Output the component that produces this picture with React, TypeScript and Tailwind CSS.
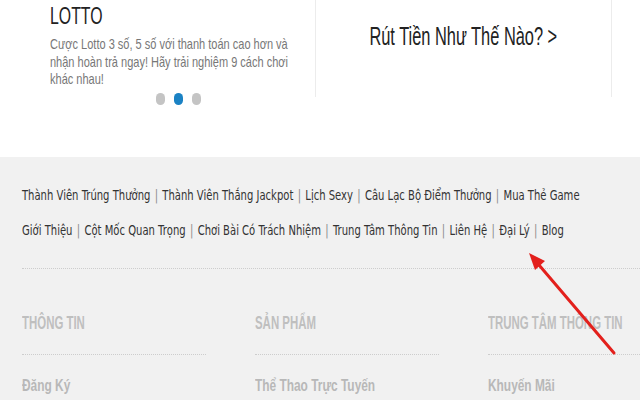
import React from 'react'

const ROW_ONE = ['Thành Viên Trúng Thưởng', 'Thành Viên Thắng Jackpot', 'Lịch Sexy', 'Câu Lạc Bộ Điểm Thưởng', 'Mua Thẻ Game']
const ROW_TWO = ['Giới Thiệu', 'Cột Mốc Quan Trọng', 'Chơi Bài Có Trách Nhiệm', 'Trung Tâm Thông Tin', 'Liên Hệ', 'Đại Lý', 'Blog']

const COLUMNS = [
  { title: 'THÔNG TIN', first: 'Đăng Ký', width: 'w-[184px]' },
  { title: 'SẢN PHẨM', first: 'Thể Thao Trực Tuyến', width: 'w-[184px]' },
  { title: 'TRUNG TÂM THÔNG TIN', first: 'Khuyến Mãi', width: 'flex-1' },
]

const arial = "font-['Liberation_Sans',Arial,sans-serif]"
const verdana = "font-['DejaVu_Sans',Verdana,sans-serif]"

function LinkRow({ items }: { items: string[] }) {
  return (
    <div className={`flex items-center origin-left scale-x-[0.716] whitespace-nowrap text-[14px] leading-[20px] text-[#333] ${verdana}`}>
      {items.map((item, i) => (
        <React.Fragment key={item}>
          {i > 0 && <span className="mx-[6px] text-[#8a8a8a]">|</span>}
          <a>{item}</a>
        </React.Fragment>
      ))}
    </div>
  )
}

function Arrow() {
  return (
    <svg className="absolute left-0 top-0 pointer-events-none" width="640" height="400" viewBox="0 0 640 400">
      <line x1="614" y1="353" x2="539" y2="265" stroke="#e3201c" strokeWidth="3" strokeLinecap="round" />
      <polygon points="529,253 545,261 535,270" fill="#e3201c" />
    </svg>
  )
}

export default function App() {
  return (
    <div className={`relative w-[640px] h-[400px] overflow-hidden bg-white ${arial}`}>
      <section className="h-[157px] flex pl-[20px]">
        <div className="w-[296px] h-[97px] border-r border-[#ececec] pl-[30px]">
          <h2 className="pt-[4px] origin-left scale-x-[0.66] text-[24px] leading-[24px] text-[#222] whitespace-nowrap">LOTTO</h2>
          <p className="mt-[7px] w-[340px] origin-left scale-x-[0.734] text-[15px] leading-[17.5px] text-[#777] whitespace-nowrap">
            Cược Lotto 3 số, 5 số với thanh toán cao hơn và
            <br />
            nhận hoàn trả ngay! Hãy trải nghiệm 9 cách chơi
            <br />
            khác nhau!
          </p>
          <div className="mt-[5px] ml-[106px] flex gap-[9px]">
            <span className="w-[9px] h-[12px] rounded-full bg-[#c4c4c4]" />
            <span className="w-[9px] h-[12px] rounded-full bg-[#1b82c4]" />
            <span className="w-[9px] h-[12px] rounded-full bg-[#c4c4c4]" />
          </div>
        </div>
        <div className="w-[296px] h-[97px] border-r border-[#ececec] flex justify-center pt-[22px]">
          <span className="origin-center scale-x-[0.655] text-[25px] leading-[28px] text-[#222] whitespace-nowrap">Rút Tiền Như Thế Nào? &gt;</span>
        </div>
      </section>

      <footer className="h-[243px] bg-[#f1f1f1] pl-[22px]">
        <div className="pt-[28px] flex flex-col gap-[15px]">
          <LinkRow items={ROW_ONE} />
          <LinkRow items={ROW_TWO} />
        </div>
        <div className="mt-[28px] border-t border-dotted border-[#cdcdcd]" />
        <div className="mt-[44px] flex gap-[49px]">
          {COLUMNS.map(col => (
            <div key={col.title} className={`${col.width} shrink-0`}>
              <h3 className="origin-left scale-x-[0.635] text-[18px] leading-[20px] font-bold text-[#bfbfbf] whitespace-nowrap">{col.title}</h3>
              <div className="mt-[21px] border-t border-dotted border-[#cdcdcd]" />
              <p className="mt-[21px] origin-left scale-x-[0.70] text-[17px] leading-[20px] font-bold text-[#b8b8b8] whitespace-nowrap">{col.first}</p>
            </div>
          ))}
        </div>
      </footer>

      <Arrow />
    </div>
  )
}
